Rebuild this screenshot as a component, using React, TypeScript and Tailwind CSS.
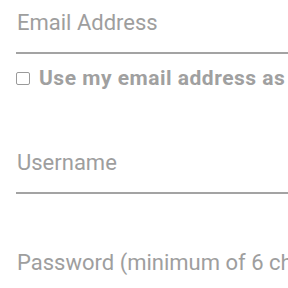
export default function App() {
  return (
    <div className="w-[288px] h-[288px] overflow-hidden bg-white pl-4" style={{ fontFamily: "Roboto, 'Liberation Sans', sans-serif" }}>
      <div className="pt-[11px] pb-[17px] border-b-2 border-[#a3a3a3]">
        <div className="text-[22px] leading-[24px] text-[#9e9e9e] pl-[1px] whitespace-nowrap">Email Address</div>
      </div>
      <div className="mt-[13px] flex items-start gap-[9px] whitespace-nowrap">
        <span className="mt-[5px] w-[14px] h-[13px] border-[1.5px] border-[#9a9a9a] rounded-[2px] shrink-0" />
        <span className="text-[21px] leading-[20px] font-bold text-[#a0a0a0] tracking-[0.5px] mt-[1px]">
          Use my email address as username
        </span>
      </div>
      <div className="mt-[52px] pt-[11px] pb-[17px] border-b-2 border-[#a3a3a3]">
        <div className="text-[22px] leading-[24px] text-[#9e9e9e] pl-[1px] whitespace-nowrap">Username</div>
      </div>
      <div className="mt-[46px] pt-[11px] pb-[17px] border-b-2 border-[#a3a3a3]">
        <div className="text-[22px] leading-[24px] text-[#9e9e9e] pl-[1px] whitespace-nowrap">Password (minimum of 6 characters)</div>
      </div>
    </div>
  );
}
